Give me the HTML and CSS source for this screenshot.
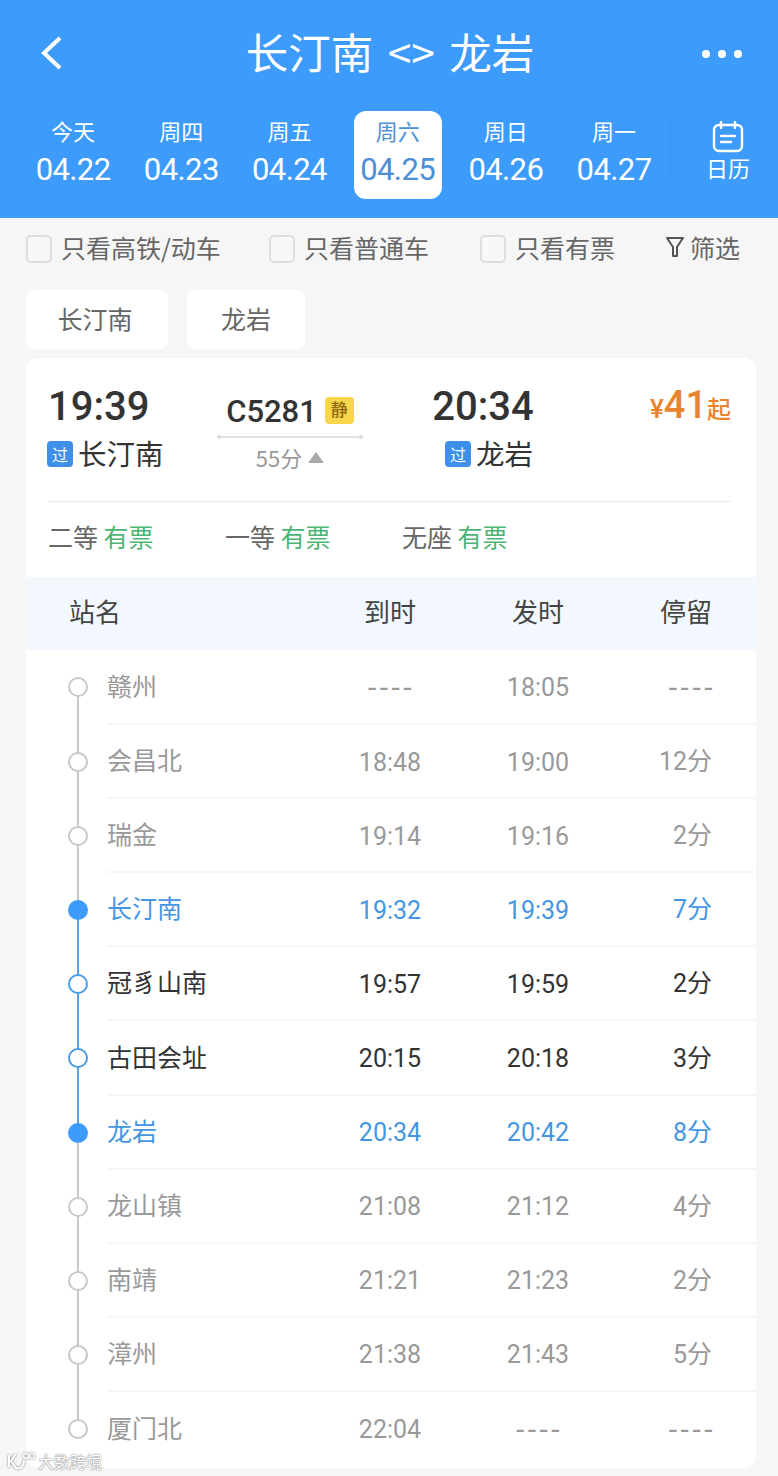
FILE: index.html
```html
<!DOCTYPE html>
<html lang="zh">
<head>
    <meta charset="UTF-8">
    <meta name="viewport" content="width=device-width, initial-scale=1.0">
    <title>长汀南 - 龙岩</title>
    <link rel="stylesheet" href="styles.css">
</head>
<body>
    <header class="top">
        <div class="title-bar">
            <svg class="back" width="26" height="36" viewBox="0 0 26 36"><path d="M22 2 L6 17 L22 32" fill="none" stroke="#fff" stroke-width="4"/></svg>
            <h1 class="title">长汀南 &lt;&gt; 龙岩</h1>
            <div class="more"><i></i><i></i><i></i></div>
        </div>
        <div class="days">
            <div class="day"><span class="week">今天</span><span class="date">04.22</span></div>
            <div class="day"><span class="week">周四</span><span class="date">04.23</span></div>
            <div class="day"><span class="week">周五</span><span class="date">04.24</span></div>
            <div class="day active"><span class="week">周六</span><span class="date">04.25</span></div>
            <div class="day"><span class="week">周日</span><span class="date">04.26</span></div>
            <div class="day"><span class="week">周一</span><span class="date">04.27</span></div>
            <div class="calendar">
                <svg width="32" height="32" viewBox="0 0 32 32"><rect x="2" y="4" width="28" height="26" rx="5" fill="none" stroke="#fff" stroke-width="2.4"/><path d="M9 1v6M23 1v6M9 15h14M9 21h10" fill="none" stroke="#fff" stroke-width="2.4" stroke-linecap="round"/></svg>
                <span>日历</span>
            </div>
        </div>
    </header>

    <div class="filters">
        <label class="check check-a"><i></i>只看高铁/动车</label>
        <label class="check check-b"><i></i>只看普通车</label>
        <label class="check check-c"><i></i>只看有票</label>
        <div class="filter-btn">
            <svg width="20" height="24" viewBox="0 0 20 24"><path d="M2 3h16l-6 9v9h-4v-9z" fill="none" stroke="#555" stroke-width="2" stroke-linejoin="round"/></svg>
            筛选
        </div>
    </div>

    <div class="stations">
        <div class="pill pill-a">长汀南</div>
        <div class="pill pill-b">龙岩</div>
    </div>

    <section class="card">
        <div class="trip">
            <div class="side side-from">
                <div class="time">19:39</div>
                <div class="place"><span class="tag">过</span>长汀南</div>
            </div>
            <div class="mid">
                <div class="train">C5281<span class="quiet">静</span></div>
                <div class="rule"></div>
                <div class="cost">55分<i class="up"></i></div>
            </div>
            <div class="side side-to">
                <div class="time">20:34</div>
                <div class="place"><span class="tag">过</span>龙岩</div>
            </div>
            <div class="price"><span class="yen">¥</span><b>41</b><span>起</span></div>
        </div>
        <div class="seats">
            <div class="seat">二等 <em>有票</em></div>
            <div class="seat">一等 <em>有票</em></div>
            <div class="seat">无座 <em>有票</em></div>
        </div>

        <div class="stop-head">
            <span class="c-name">站名</span>
            <span class="c-time">到时</span>
            <span class="c-time">发时</span>
            <span class="c-stay">停留</span>
        </div>

        <div class="stop off first">
            <div class="rail"><i></i></div>
            <div class="stop-body"><span class="c-name">赣州</span><span class="c-time dash">----</span><span class="c-time">18:05</span><span class="c-stay dash">----</span></div>
        </div>
        <div class="stop off">
            <div class="rail"><i></i></div>
            <div class="stop-body"><span class="c-name">会昌北</span><span class="c-time">18:48</span><span class="c-time">19:00</span><span class="c-stay">12分</span></div>
        </div>
        <div class="stop off">
            <div class="rail"><i></i></div>
            <div class="stop-body"><span class="c-name">瑞金</span><span class="c-time">19:14</span><span class="c-time">19:16</span><span class="c-stay">2分</span></div>
        </div>
        <div class="stop end board">
            <div class="rail"><i></i></div>
            <div class="stop-body"><span class="c-name">长汀南</span><span class="c-time">19:32</span><span class="c-time">19:39</span><span class="c-stay">7分</span></div>
        </div>
        <div class="stop on">
            <div class="rail"><i></i></div>
            <div class="stop-body"><span class="c-name">冠豸山南</span><span class="c-time">19:57</span><span class="c-time">19:59</span><span class="c-stay">2分</span></div>
        </div>
        <div class="stop on">
            <div class="rail"><i></i></div>
            <div class="stop-body"><span class="c-name">古田会址</span><span class="c-time">20:15</span><span class="c-time">20:18</span><span class="c-stay">3分</span></div>
        </div>
        <div class="stop end alight">
            <div class="rail"><i></i></div>
            <div class="stop-body"><span class="c-name">龙岩</span><span class="c-time">20:34</span><span class="c-time">20:42</span><span class="c-stay">8分</span></div>
        </div>
        <div class="stop off">
            <div class="rail"><i></i></div>
            <div class="stop-body"><span class="c-name">龙山镇</span><span class="c-time">21:08</span><span class="c-time">21:12</span><span class="c-stay">4分</span></div>
        </div>
        <div class="stop off">
            <div class="rail"><i></i></div>
            <div class="stop-body"><span class="c-name">南靖</span><span class="c-time">21:21</span><span class="c-time">21:23</span><span class="c-stay">2分</span></div>
        </div>
        <div class="stop off">
            <div class="rail"><i></i></div>
            <div class="stop-body"><span class="c-name">漳州</span><span class="c-time">21:38</span><span class="c-time">21:43</span><span class="c-stay">5分</span></div>
        </div>
        <div class="stop off last">
            <div class="rail"><i></i></div>
            <div class="stop-body"><span class="c-name">厦门北</span><span class="c-time">22:04</span><span class="c-time dash">----</span><span class="c-stay dash">----</span></div>
        </div>
    </section>

    <div class="watermark">
        <svg width="28" height="18" viewBox="0 0 28 18"><path d="M2 3v12M9 2 4 9l5 7c6 1 8-3 8-8" fill="none" stroke="#fff" stroke-width="2"/><circle cx="19" cy="4" r="2.5" fill="none" stroke="#fff" stroke-width="1.4"/><circle cx="25" cy="4" r="2.5" fill="none" stroke="#fff" stroke-width="1.4"/></svg>
        <span>大数跨境</span>
    </div>
</body>
</html>
```

FILE: styles.css
```css
* {
    box-sizing: border-box;
}
html, body {
    margin: 0;
    padding: 0;
}
body {
    position: relative;
    height: 1476px;
    overflow: hidden;
    background: #f6f6f6;
    font-family: "Noto Sans CJK SC", Roboto, sans-serif;
    color: #333;
}
i, em {
    font-style: normal;
}

/* 상단 */
.top {
    height: 218px;
    background: #3d9bfb;
    color: #fff;
}
.title-bar {
    display: flex;
    align-items: center;
    justify-content: space-between;
    height: 108px;
    padding: 0 36px 0 38px;
}
.title {
    margin: 0 0 6px 14px;
    font-size: 42.5px;
    font-weight: 400;
    line-height: 60px;
    word-spacing: 5px;
}
.more {
    display: flex;
    gap: 8px;
}
.more i {
    width: 8px;
    height: 8px;
    border-radius: 50%;
    background: #fff;
}
.days {
    display: flex;
    align-items: flex-start;
    padding: 3px 0 0 19px;
}
.day {
    display: flex;
    flex: none;
    flex-direction: column;
    align-items: center;
    width: 108.2px;
    height: 88px;
    padding-top: 4px;
}
.day.active {
    width: 88px;
    margin: 0 10.1px;
    border-radius: 12px;
    background: #fff;
    color: #4c8fd6;
}
.week {
    font-size: 22px;
    line-height: 30px;
}
.date {
    margin-top: 3px;
    font-family: Roboto, sans-serif;
    font-size: 31px;
    line-height: 44px;
    letter-spacing: -0.6px;
}
.calendar {
    display: flex;
    flex: none;
    flex-direction: column;
    align-items: center;
    width: 105px;
    height: 72px;
    margin-left: 5px;
    padding: 10px 0 0 5px;
    font-size: 22px;
    line-height: 30px;
    box-shadow: -6px 0 8px -6px rgba(0, 60, 140, .05);
}
.calendar span {
    margin-top: -1px;
}

/* 필터 */
.filters {
    display: flex;
    align-items: center;
    height: 62px;
    padding: 0 0 4px 26px;
    font-size: 25px;
    color: #666;
}
.check {
    display: flex;
    flex: none;
    align-items: center;
    gap: 9px;
    line-height: 30px;
}
.check i {
    flex: none;
    width: 26px;
    height: 28px;
    margin-top: 4px;
    border: 2px solid #dedede;
    border-radius: 5px;
    background: #f8f8f8;
}
.check-a {
    width: 243px;
}
.check-b {
    width: 211px;
}
.check-c {
    width: 185px;
}
.filter-btn {
    display: flex;
    align-items: center;
    gap: 5px;
    line-height: 30px;
}

.stations {
    display: flex;
    gap: 19px;
    height: 59px;
    margin: 10px 0 9px 26px;
}
.pill {
    display: flex;
    align-items: center;
    justify-content: center;
    padding-bottom: 3px;
    border-radius: 8px;
    background: #fff;
    font-size: 25px;
    color: #666;
}
.pill-a {
    width: 142px;
    padding-right: 4px;
}
.pill-b {
    width: 118px;
}

/* 카드 */
.card {
    width: 730px;
    margin-left: 26px;
    padding-bottom: 2px;
    border-radius: 12px;
    background: #fff;
}
.trip {
    display: flex;
    height: 144px;
    margin: 0 25px 0 22px;
    padding-top: 20px;
    border-bottom: 1px solid #ececec;
}
.side {
    display: flex;
    flex-direction: column;
}
.side-from {
    width: 169px;
}
.side-to {
    align-items: center;
    width: 240px;
}
.side-to .place {
    margin-left: 12px;
}
.time {
    margin-top: 1px;
    font-family: Roboto, sans-serif;
    font-size: 40px;
    font-weight: 500;
    line-height: 56px;
    color: #333;
}
.place {
    display: flex;
    align-items: center;
    gap: 5px;
    margin-top: -3px;
    font-size: 28.5px;
    line-height: 42px;
}
.side-from .place {
    margin-left: -1px;
}
.tag {
    display: flex;
    align-items: center;
    justify-content: center;
    width: 26px;
    height: 26px;
    margin-top: 2px;
    border-radius: 4px;
    background: #3d8fe8;
    color: #fff;
    font-size: 16px;
}
.mid {
    display: flex;
    flex-direction: column;
    align-items: center;
    width: 146px;
    padding-top: 14px;
}
.train {
    display: flex;
    align-items: center;
    gap: 8px;
    font-family: Roboto, "Noto Sans CJK SC", sans-serif;
    font-size: 31px;
    font-weight: 500;
    line-height: 40px;
}
.quiet {
    display: flex;
    align-items: center;
    justify-content: center;
    width: 29px;
    height: 27px;
    margin-top: -4px;
    border-radius: 4px;
    background: #f8d54a;
    color: #8a6a10;
    font-size: 17px;
    font-weight: 500;
}
.rule {
    position: relative;
    width: 146px;
    height: 2px;
    margin-top: 4px;
    background: #e2e2e2;
}
.rule::before,
.rule::after {
    content: "";
    position: absolute;
    top: -1px;
    width: 4px;
    height: 4px;
    border-radius: 50%;
    background: #dcdcdc;
}
.rule::before {
    left: 0;
}
.rule::after {
    right: 0;
}
.cost {
    display: flex;
    align-items: center;
    gap: 6px;
    margin-top: 2px;
    font-size: 22px;
    line-height: 34px;
    color: #999;
}
.up {
    width: 0;
    height: 0;
    border: 8px solid transparent;
    border-top: 0;
    border-bottom: 11px solid #a8a8a8;
}
.price {
    flex: 1;
    padding-top: 5px;
    text-align: right;
    font-family: Roboto, "Noto Sans CJK SC", sans-serif;
    font-size: 24px;
    font-weight: 500;
    line-height: 44px;
    color: #e8832e;
}
.price .yen {
    font-size: 26px;
}
.price b {
    font-size: 38px;
    font-weight: 500;
}
.seats {
    display: flex;
    align-items: center;
    height: 75px;
    padding: 0 0 8px 22px;
    font-size: 25px;
    color: #666;
}
.seat {
    width: 177px;
}
.seat em {
    color: #4cb574;
}

/* 정차역 */
.stop-head {
    display: flex;
    align-items: center;
    height: 73px;
    padding: 0 0 7px 43px;
    background: #f3f8fe;
    font-size: 26px;
    color: #444;
}
.c-name {
    flex: 1;
}
.c-time {
    width: 148px;
    text-align: center;
}
.c-stay {
    width: 144px;
    padding-right: 44px;
    text-align: right;
}
.stop {
    display: flex;
    height: 74.1px;
}
.stop.first {
    height: 75.1px;
}
.rail {
    position: relative;
    flex: none;
    width: 81px;
}
.rail::before,
.rail::after {
    content: "";
    position: absolute;
    left: 51px;
    width: 2px;
    height: 50%;
    background: #c8c8c8;
}
.rail::before {
    top: 0;
}
.rail::after {
    bottom: 0;
}
.rail i {
    position: absolute;
    z-index: 1;
    left: 42px;
    top: 27px;
    width: 20px;
    height: 20px;
    border: 2px solid #c8c8c8;
    border-radius: 50%;
    background: #fff;
}
.first .rail::before,
.last .rail::after {
    display: none;
}
.stop-body {
    display: flex;
    flex: 1;
    align-items: center;
    padding-bottom: 4px;
    border-bottom: 2px solid #f6f6f6;
    font-family: "Noto Sans CJK SC", Roboto, sans-serif;
    font-size: 25px;
}
.stop-body .c-time,
.stop-body .c-stay {
    font-family: Roboto, "Noto Sans CJK SC", sans-serif;
}
.stop-body .c-time {
    margin-top: 6px;
}
.stop-body .dash {
    font-size: 30px;
    line-height: 1;
    letter-spacing: 3.5px;
}
.c-time.dash {
    text-indent: 3px;
}
.stop-body .c-stay.dash {
    margin-top: 6px;
    padding-right: 40px;
}
.last .stop-body {
    border-bottom: 0;
}
.off .stop-body {
    color: #999;
}
.on .stop-body {
    color: #333;
}
.end .stop-body {
    color: #4596e2;
}
.on .rail::before,
.on .rail::after,
.board .rail::after,
.alight .rail::before {
    background: #5aa2e6;
}
.on .rail i {
    border-color: #4a9de8;
}
.end .rail i {
    border-color: #3d9bfb;
    background: #3d9bfb;
}

.watermark {
    position: absolute;
    left: 7px;
    bottom: 5px;
    display: flex;
    align-items: center;
    gap: 3px;
    font-size: 16px;
    line-height: 20px;
    color: #fff;
    text-shadow: 0 0 1px #777, 0 0 2px #888;
}
.watermark svg {
    filter: drop-shadow(0 0 1px #777);
}
```
